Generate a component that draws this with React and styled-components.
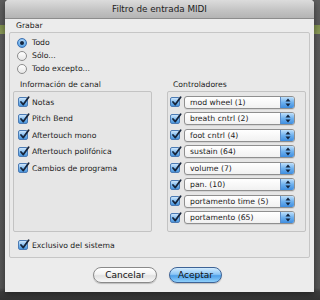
import React from 'react';
import styled, { createGlobalStyle } from 'styled-components';

const GlobalStyle = createGlobalStyle`
    html, body {
        margin: 0;
        padding: 0;
        width: 320px;
        height: 300px;
        overflow: hidden;
        background: linear-gradient(to bottom,
            #5e5e5e 0px, #5a5a5a 25px,
            #7f8f4f 25px, #8a9a58 34px,
            #5b5b5b 34px, #555555 288px,
            #3c3c3c 292px, #333333 300px);
        font-family: "DejaVu Sans", "Liberation Sans", sans-serif;
    }
`;

const Window = styled.div`
    margin-left: 5px;
    width: 309px;
    height: 292px;
    background: #ececec;
    border-radius: 4px 4px 0 0;
    box-shadow: 0 2px 6px rgba(0, 0, 0, 0.45);
    display: flex;
    flex-direction: column;
    overflow: hidden;
`;

const TitleBar = styled.div`
    height: 19px;
    box-sizing: border-box;
    background: linear-gradient(to bottom, #dcdcdc, #c2c2c2 60%, #b4b4b4);
    border-bottom: 1px solid #8c8c8c;
    display: flex;
    align-items: center;
    justify-content: center;
    font-size: 8.8px;
    color: #222;
`;

const Body = styled.div`
    flex: 1;
    display: flex;
    flex-direction: column;
    padding: 0 4px 0 4px;
`;

const SectionLabel = styled.div`
    height: 13px;
    display: flex;
    align-items: center;
    padding-left: ${(p) => p.indent || 7}px;
    font-size: 7.7px;
    color: #222;
`;

const OuterBox = styled.div`
    width: 301px;
    height: 226px;
    box-sizing: border-box;
    border: 1px solid #c6c6c6;
    border-radius: 2px;
    background: #e9e9e9;
    padding: 3px 3px 5px 3px;
    display: flex;
    flex-direction: column;
`;

const RadioList = styled.div`
    display: flex;
    flex-direction: column;
    padding-left: 4px;
`;

const Row = styled.label`
    height: ${(p) => p.h || 13}px;
    display: flex;
    align-items: center;
    gap: ${(p) => p.gap || 5}px;
    font-size: 7.7px;
    color: #1c1c1c;
    white-space: nowrap;
`;

const RadioDot = styled.span`
    width: 10px;
    height: 10px;
    box-sizing: border-box;
    border-radius: 50%;
    display: flex;
    align-items: center;
    justify-content: center;
    border: 1px solid ${(p) => (p.on ? '#3c6fb0' : '#8d8d8d')};
    background: ${(p) =>
        p.on
            ? 'radial-gradient(circle at 50% 35%, #cfe6fb, #6aaeea 60%, #3b86d4)'
            : 'linear-gradient(to bottom, #ffffff, #e6e6e6)'};
    &::after {
        content: '';
        display: ${(p) => (p.on ? 'block' : 'none')};
        width: 4px;
        height: 4px;
        border-radius: 50%;
        background: #13253f;
    }
`;

const Columns = styled.div`
    display: grid;
    grid-template-columns: 139px 139px;
    column-gap: 15px;
`;

const Group = styled.div`
    display: flex;
    flex-direction: column;
`;

const GroupLabel = styled(SectionLabel)`
    height: 16px;
    padding-top: 2px;
    box-sizing: border-box;
`;

const GroupBox = styled.div`
    height: 141px;
    box-sizing: border-box;
    border: 1px solid #c3c3c3;
    border-radius: 2px;
    background: #e6e6e6;
    padding: 2px ${(p) => p.pad}px 0;
    display: flex;
    flex-direction: column;
`;

const CheckBox = styled.span`
    width: 10px;
    height: 10px;
    flex: none;
    box-sizing: border-box;
    border: 1px solid #4c7bb4;
    border-radius: 2px;
    background: linear-gradient(to bottom, #cfe6fb, #7ab8ee 55%, #4a95dc);
    position: relative;
    svg {
        position: absolute;
        left: 0px;
        top: -2px;
    }
`;

const Popup = styled.div`
    width: 111px;
    height: 13px;
    box-sizing: border-box;
    border: 1px solid #8f8f8f;
    border-radius: 3px;
    background: linear-gradient(to bottom, #ffffff, #f1f1f1);
    display: flex;
    align-items: center;
    overflow: hidden;
    box-shadow: 0 1px 0 rgba(0, 0, 0, 0.08);
`;

const PopupText = styled.span`
    flex: 1;
    padding-left: 5px;
    font-size: 7.7px;
    color: #1c1c1c;
`;

const PopupArrow = styled.span`
    width: 13px;
    height: 100%;
    border-left: 1px solid #5b8cc8;
    background: linear-gradient(to bottom, #bfe0fb, #6db0ee 50%, #3f8ee0);
    display: flex;
    align-items: center;
    justify-content: center;
`;

const ExclusiveRow = styled(Row)`
    margin-top: 6px;
    margin-left: 5px;
`;

const ButtonBar = styled.div`
    flex: 1;
    display: flex;
    align-items: center;
    justify-content: center;
    gap: 12px;
    padding-right: 4px;
`;

const Button = styled.button`
    height: 16px;
    width: ${(p) => p.w}px;
    padding: 0;
    border-radius: 8px;
    font-family: "DejaVu Sans", "Liberation Sans", sans-serif;
    font-size: 9px;
    color: #111;
    border: 1px solid ${(p) => (p.primary ? '#3e6396' : '#8a8a8a')};
    background: ${(p) =>
        p.primary
            ? 'linear-gradient(to bottom, #d3ebfd 0%, #8cc6f6 45%, #4e9fe8 55%, #8fd0fb 100%)'
            : 'linear-gradient(to bottom, #ffffff 0%, #f3f3f3 45%, #e2e2e2 55%, #f7f7f7 100%)'};
    box-shadow: 0 1px 1px rgba(0, 0, 0, 0.2);
`;

const Check = () => (
    <CheckBox>
        <svg width="11" height="11" viewBox="0 0 11 11">
            <path d="M2 6 L4.3 8.6 L9.6 1.2" fill="none" stroke="#16243a" strokeWidth="1.8" strokeLinecap="round" strokeLinejoin="round" />
        </svg>
    </CheckBox>
);

const Arrows = () => (
    <svg width="6" height="9" viewBox="0 0 6 9">
        <path d="M3 0.5 L5.5 3.5 L0.5 3.5 Z" fill="#10223c" />
        <path d="M3 8.5 L5.5 5.5 L0.5 5.5 Z" fill="#10223c" />
    </svg>
);

const radios = [
    { id: 'todo', text: 'Todo', on: true },
    { id: 'solo', text: 'Sólo...' },
    { id: 'excepto', text: 'Todo excepto...' },
];

const channelInfo = ['Notas', 'Pitch Bend', 'Aftertouch mono', 'Aftertouch polifónica', 'Cambios de programa'];

const controllers = [
    'mod wheel (1)',
    'breath cntrl (2)',
    'foot cntrl (4)',
    'sustain (64)',
    'volume (7)',
    'pan. (10)',
    'portamento time (5)',
    'portamento (65)',
];

const App = () => {
    return (
        <>
            <GlobalStyle />
            <Window>
                <TitleBar>Filtro de entrada MIDI</TitleBar>
                <Body>
                    <SectionLabel>Grabar</SectionLabel>
                    <OuterBox>
                        <RadioList>
                            {radios.map((r) => (
                                <Row key={r.id}>
                                    <RadioDot on={r.on} />
                                    {r.text}
                                </Row>
                            ))}
                        </RadioList>
                        <Columns>
                            <Group>
                                <GroupLabel>Información de canal</GroupLabel>
                                <GroupBox pad={4}>
                                    {channelInfo.map((t) => (
                                        <Row key={t} h={16.5} gap={4}>
                                            <Check />
                                            {t}
                                        </Row>
                                    ))}
                                </GroupBox>
                            </Group>
                            <Group>
                                <GroupLabel indent={6}>Controladores</GroupLabel>
                                <GroupBox pad={2}>
                                    {controllers.map((c) => (
                                        <Row key={c} h={16.5} gap={4}>
                                            <Check />
                                            <Popup>
                                                <PopupText>{c}</PopupText>
                                                <PopupArrow>
                                                    <Arrows />
                                                </PopupArrow>
                                            </Popup>
                                        </Row>
                                    ))}
                                </GroupBox>
                            </Group>
                        </Columns>
                        <ExclusiveRow h={14} gap={4}>
                            <Check />
                            Exclusivo del sistema
                        </ExclusiveRow>
                    </OuterBox>
                    <ButtonBar>
                        <Button w={64}>Cancelar</Button>
                        <Button w={53} primary>Aceptar</Button>
                    </ButtonBar>
                </Body>
            </Window>
        </>
    );
};

export default App;
